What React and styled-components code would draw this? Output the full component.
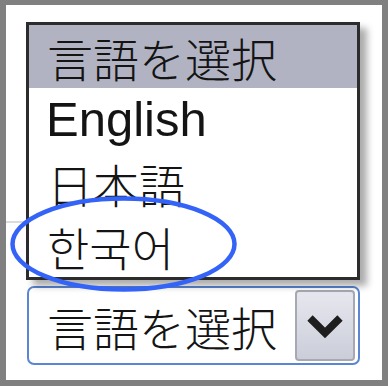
import React from 'react';
import styled, { createGlobalStyle } from 'styled-components';

const GlobalStyle = createGlobalStyle`
  html, body {
    margin: 0;
    padding: 0;
    background: #808080;
  }
  * {
    box-sizing: border-box;
  }
`;

const Frame = styled.div`
  position: relative;
  width: 388px;
  height: 386px;
  border-style: solid;
  border-color: #808080;
  border-width: 5px 6px 6px 6px;
  background: #ffffff;
  padding: 17px 0 0 20px;
  font-family: 'Noto Sans CJK JP', 'Noto Sans CJK KR', sans-serif;
  font-weight: 300;
  color: #141414;
`;

const Rule = styled.div`
  position: absolute;
  left: 0;
  top: 216px;
  width: 20px;
  height: 2px;
  background: #dcdcdc;
`;

const ListBox = styled.div`
  position: relative;
  z-index: 1;
  width: 334px;
  height: 258px;
  border: 3px solid #2c2c2c;
  background: #ffffff;
  box-shadow: 7px 6px 7px rgba(0, 0, 0, 0.33);
  display: flex;
  flex-direction: column;
`;

const Option = styled.div`
  height: 63px;
  display: flex;
  align-items: center;
  padding-left: ${(p) => (p.$latin ? '17px' : '18px')};
  background: ${(p) => (p.$selected ? '#b1b3c2' : 'transparent')};
  font-family: ${(p) =>
    p.$latin
      ? "'Liberation Sans', Arial, sans-serif"
      : "'Noto Sans CJK JP', 'Noto Sans CJK KR', sans-serif"};
  font-weight: ${(p) => (p.$latin ? 400 : 300)};
  font-size: ${(p) => (p.$latin ? '49px' : '46px')};
  line-height: 1;
  white-space: nowrap;
`;

const Select = styled.div`
  margin: 6px 0 0 1px;
  width: 333px;
  height: 79px;
  border: 2px solid #5a86d2;
  border-radius: 7px;
  background: #ffffff;
  display: flex;
  align-items: center;
  justify-content: space-between;
  padding: 0 3px 0 18px;
`;

const SelectText = styled.span`
  font-size: 46px;
  line-height: 1;
  white-space: nowrap;
`;

const DropButton = styled.div`
  width: 60px;
  height: 71px;
  border: 2px solid #a6a9b3;
  border-radius: 4px;
  background: linear-gradient(#e6e7ee, #cbcdd9);
  display: flex;
  align-items: center;
  justify-content: center;
`;

const Annotation = styled.svg`
  position: absolute;
  z-index: 2;
  left: 2px;
  top: 191px;
  overflow: visible;
`;

const options = [
  { label: '言語を選択', selected: true },
  { label: 'English', latin: true },
  { label: '日本語' },
  { label: '한국어' },
];

const Chevron = () => (
  <svg width="38" height="28" viewBox="0 0 38 28">
    <polyline
      points="4,6 19,21 34,6"
      fill="none"
      stroke="#1e1e1e"
      strokeWidth="7.5"
      strokeLinejoin="miter"
    />
  </svg>
);

const App = () => (
  <>
    <GlobalStyle />
    <Frame>
      <Rule />
      <ListBox>
        {options.map((o) => (
          <Option key={o.label} $selected={o.selected} $latin={o.latin}>
            {o.label}
          </Option>
        ))}
      </ListBox>
      <Select>
        <SelectText>言語を選択</SelectText>
        <DropButton>
          <Chevron />
        </DropButton>
      </Select>
      <Annotation width="232" height="98" viewBox="0 0 232 98">
        <ellipse
          cx="115.5"
          cy="48"
          rx="111"
          ry="45.5"
          fill="none"
          stroke="#3463f8"
          strokeWidth="4.5"
        />
      </Annotation>
    </Frame>
  </>
);

export default App;
